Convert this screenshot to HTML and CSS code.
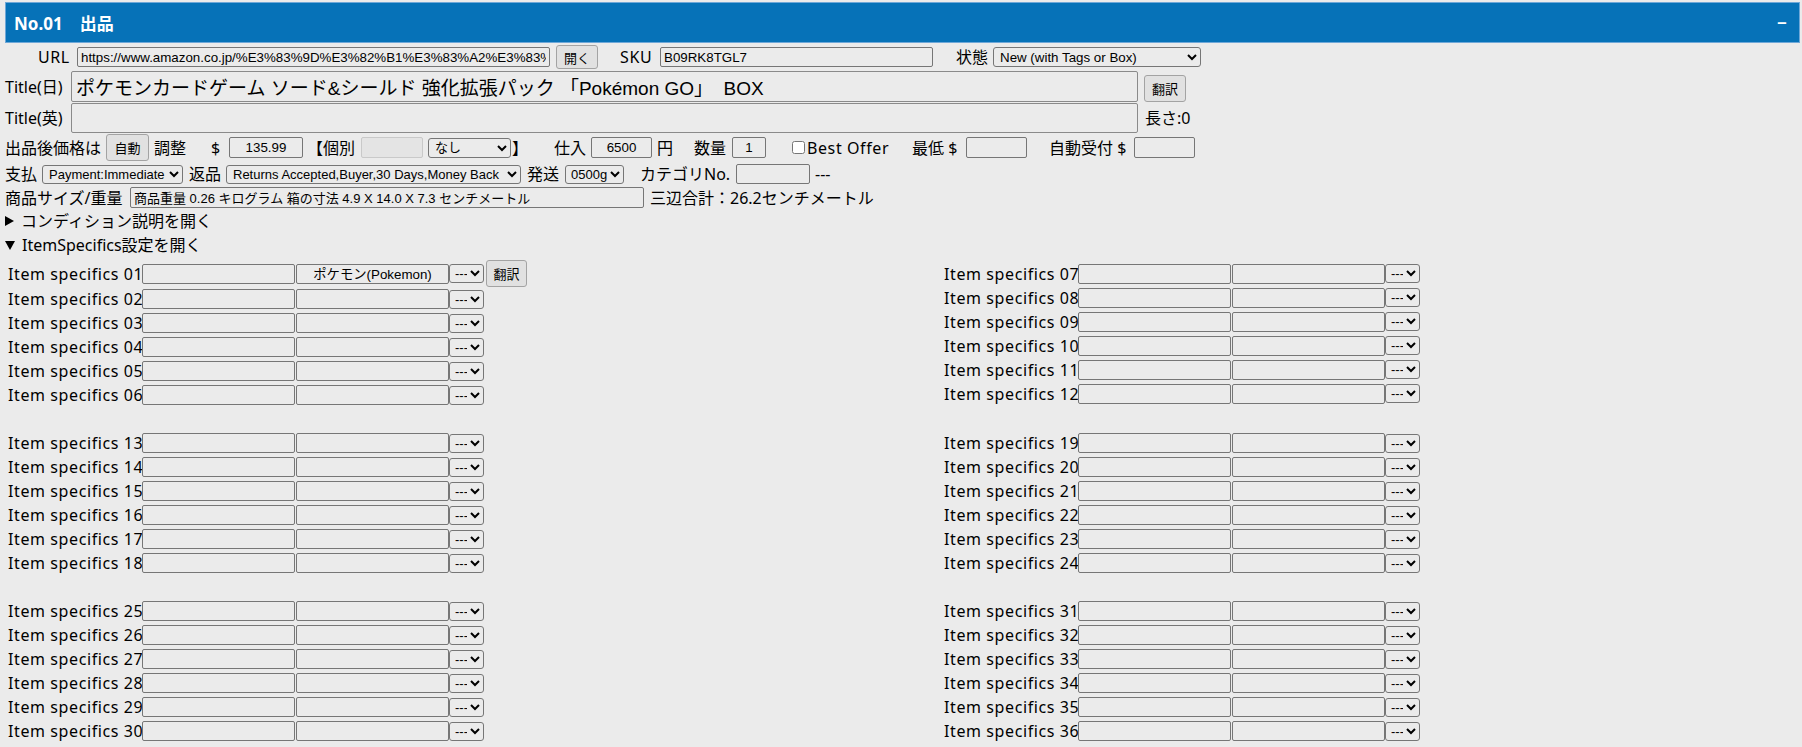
FILE: index.html
```html
<!DOCTYPE html>
<html lang="ja">
<head>
<meta charset="utf-8">
<title>No.01 出品</title>
<link rel="stylesheet" href="styles.css">
</head>
<body>
<div class="panel">
  <div class="panel-head"><span class="panel-title">No.01　出品</span><span class="panel-toggle">−</span></div>
  <div class="panel-body">
    <div class="row row-url">
      <span class="lbl lat w-url">URL</span>
      <input class="in in-url" value="https://www.amazon.co.jp/%E3%83%9D%E3%82%B1%E3%83%A2%E3%83%B3%E3%82%AB%E3%83%BC%E3%83%89">
      <button class="btn btn-open">開く</button>
      <span class="lbl lat w-sku">SKU</span>
      <input class="in in-sku" value="B09RK8TGL7">
      <span class="lbl w-state">状態</span>
      <select class="sel sel-cond"><option>New (with Tags or Box)</option></select>
    </div>
    <div class="row row-t1">
      <span class="lbl w-title">Title(日)</span>
      <input class="in in-title" value="ポケモンカードゲーム ソード&amp;シールド 強化拡張パック 「Pokémon GO」  BOX">
      <button class="btn btn-tr">翻訳</button>
    </div>
    <div class="row row-t2">
      <span class="lbl w-title">Title(英)</span>
      <input class="in in-title" value="">
      <span class="lbl len">長さ:0</span>
    </div>
    <div class="row row-price">
      <span class="lbl w-after">出品後価格は</span>
      <button class="btn btn-auto">自動</button>
      <span class="lbl w-adj">調整</span>
      <span class="lbl w-dol">$</span>
      <input class="in in-c in-price" value="135.99">
      <span class="lbl w-kobetsu">【個別</span>
      <input class="in in-dis" disabled>
      <select class="sel sel-nashi"><option>なし</option></select>
      <span class="lbl w-br">】</span>
      <span class="lbl w-shiire">仕入</span>
      <input class="in in-c in-cost" value="6500">
      <span class="lbl w-yen">円</span>
      <span class="lbl w-qty">数量</span>
      <input class="in in-c in-qty" value="1">
      <input type="checkbox" class="chk">
      <span class="lbl lat w-best">Best Offer</span>
      <span class="lbl w-min">最低 $</span>
      <input class="in in-min">
      <span class="lbl w-autoacc">自動受付 $</span>
      <input class="in in-min">
    </div>
    <div class="row row-pay">
      <span class="lbl w-pay">支払</span>
      <select class="sel sel-pay"><option>Payment:Immediate</option></select>
      <span class="lbl w-ret">返品</span>
      <select class="sel sel-ret"><option>Returns Accepted,Buyer,30 Days,Money Back</option></select>
      <span class="lbl w-ship">発送</span>
      <select class="sel sel-ship"><option>0500g</option></select>
      <span class="lbl w-cat">カテゴリNo.</span>
      <input class="in in-cat">
      <span class="lbl w-dash">---</span>
    </div>
    <div class="row row-size">
      <span class="lbl w-size">商品サイズ/重量</span>
      <input class="in in-size" value="商品重量 0.26 キログラム 箱の寸法 4.9 X 14.0 X 7.3 センチメートル">
      <span class="lbl w-sum">三辺合計：26.2センチメートル</span>
    </div>
    <details class="dt">
      <summary class="sum"><svg class="tri" width="9" height="10" viewBox="0 0 9 10"><polygon points="0,0 9,5 0,10"/></svg><span class="sum-text">コンディション説明を開く</span></summary>
      <textarea class="cond-text"></textarea>
    </details>
    <details class="dt" open>
      <summary class="sum"><svg class="tri" width="10" height="9" viewBox="0 0 10 9"><polygon points="0,0 10,0 5,9"/></svg><span class="sum-text">ItemSpecifics設定を開く</span></summary>
      <div class="specs">
        <div class="band">
          <div class="col col-l">
            <div class="is-row is-row-first"><span class="is-label">Item specifics 01</span><input class="in is-in"><input class="in is-in in-c" value="ポケモン(Pokemon)"><select class="sel is-sel"><option>---</option></select><button class="btn btn-is">翻訳</button></div>
            <div class="is-row"><span class="is-label">Item specifics 02</span><input class="in is-in"><input class="in is-in in-c"><select class="sel is-sel"><option>---</option></select></div>
            <div class="is-row"><span class="is-label">Item specifics 03</span><input class="in is-in"><input class="in is-in in-c"><select class="sel is-sel"><option>---</option></select></div>
            <div class="is-row"><span class="is-label">Item specifics 04</span><input class="in is-in"><input class="in is-in in-c"><select class="sel is-sel"><option>---</option></select></div>
            <div class="is-row"><span class="is-label">Item specifics 05</span><input class="in is-in"><input class="in is-in in-c"><select class="sel is-sel"><option>---</option></select></div>
            <div class="is-row"><span class="is-label">Item specifics 06</span><input class="in is-in"><input class="in is-in in-c"><select class="sel is-sel"><option>---</option></select></div>
          </div>
          <div class="col col-r">
            <div class="is-row"><span class="is-label">Item specifics 07</span><input class="in is-in"><input class="in is-in in-c"><select class="sel is-sel"><option>---</option></select></div>
            <div class="is-row"><span class="is-label">Item specifics 08</span><input class="in is-in"><input class="in is-in in-c"><select class="sel is-sel"><option>---</option></select></div>
            <div class="is-row"><span class="is-label">Item specifics 09</span><input class="in is-in"><input class="in is-in in-c"><select class="sel is-sel"><option>---</option></select></div>
            <div class="is-row"><span class="is-label">Item specifics 10</span><input class="in is-in"><input class="in is-in in-c"><select class="sel is-sel"><option>---</option></select></div>
            <div class="is-row"><span class="is-label">Item specifics 11</span><input class="in is-in"><input class="in is-in in-c"><select class="sel is-sel"><option>---</option></select></div>
            <div class="is-row"><span class="is-label">Item specifics 12</span><input class="in is-in"><input class="in is-in in-c"><select class="sel is-sel"><option>---</option></select></div>
          </div>
        </div>
        <div class="band">
          <div class="col col-l">
            <div class="is-row"><span class="is-label">Item specifics 13</span><input class="in is-in"><input class="in is-in in-c"><select class="sel is-sel"><option>---</option></select></div>
            <div class="is-row"><span class="is-label">Item specifics 14</span><input class="in is-in"><input class="in is-in in-c"><select class="sel is-sel"><option>---</option></select></div>
            <div class="is-row"><span class="is-label">Item specifics 15</span><input class="in is-in"><input class="in is-in in-c"><select class="sel is-sel"><option>---</option></select></div>
            <div class="is-row"><span class="is-label">Item specifics 16</span><input class="in is-in"><input class="in is-in in-c"><select class="sel is-sel"><option>---</option></select></div>
            <div class="is-row"><span class="is-label">Item specifics 17</span><input class="in is-in"><input class="in is-in in-c"><select class="sel is-sel"><option>---</option></select></div>
            <div class="is-row"><span class="is-label">Item specifics 18</span><input class="in is-in"><input class="in is-in in-c"><select class="sel is-sel"><option>---</option></select></div>
          </div>
          <div class="col col-r">
            <div class="is-row"><span class="is-label">Item specifics 19</span><input class="in is-in"><input class="in is-in in-c"><select class="sel is-sel"><option>---</option></select></div>
            <div class="is-row"><span class="is-label">Item specifics 20</span><input class="in is-in"><input class="in is-in in-c"><select class="sel is-sel"><option>---</option></select></div>
            <div class="is-row"><span class="is-label">Item specifics 21</span><input class="in is-in"><input class="in is-in in-c"><select class="sel is-sel"><option>---</option></select></div>
            <div class="is-row"><span class="is-label">Item specifics 22</span><input class="in is-in"><input class="in is-in in-c"><select class="sel is-sel"><option>---</option></select></div>
            <div class="is-row"><span class="is-label">Item specifics 23</span><input class="in is-in"><input class="in is-in in-c"><select class="sel is-sel"><option>---</option></select></div>
            <div class="is-row"><span class="is-label">Item specifics 24</span><input class="in is-in"><input class="in is-in in-c"><select class="sel is-sel"><option>---</option></select></div>
          </div>
        </div>
        <div class="band">
          <div class="col col-l">
            <div class="is-row"><span class="is-label">Item specifics 25</span><input class="in is-in"><input class="in is-in in-c"><select class="sel is-sel"><option>---</option></select></div>
            <div class="is-row"><span class="is-label">Item specifics 26</span><input class="in is-in"><input class="in is-in in-c"><select class="sel is-sel"><option>---</option></select></div>
            <div class="is-row"><span class="is-label">Item specifics 27</span><input class="in is-in"><input class="in is-in in-c"><select class="sel is-sel"><option>---</option></select></div>
            <div class="is-row"><span class="is-label">Item specifics 28</span><input class="in is-in"><input class="in is-in in-c"><select class="sel is-sel"><option>---</option></select></div>
            <div class="is-row"><span class="is-label">Item specifics 29</span><input class="in is-in"><input class="in is-in in-c"><select class="sel is-sel"><option>---</option></select></div>
            <div class="is-row"><span class="is-label">Item specifics 30</span><input class="in is-in"><input class="in is-in in-c"><select class="sel is-sel"><option>---</option></select></div>
          </div>
          <div class="col col-r">
            <div class="is-row"><span class="is-label">Item specifics 31</span><input class="in is-in"><input class="in is-in in-c"><select class="sel is-sel"><option>---</option></select></div>
            <div class="is-row"><span class="is-label">Item specifics 32</span><input class="in is-in"><input class="in is-in in-c"><select class="sel is-sel"><option>---</option></select></div>
            <div class="is-row"><span class="is-label">Item specifics 33</span><input class="in is-in"><input class="in is-in in-c"><select class="sel is-sel"><option>---</option></select></div>
            <div class="is-row"><span class="is-label">Item specifics 34</span><input class="in is-in"><input class="in is-in in-c"><select class="sel is-sel"><option>---</option></select></div>
            <div class="is-row"><span class="is-label">Item specifics 35</span><input class="in is-in"><input class="in is-in in-c"><select class="sel is-sel"><option>---</option></select></div>
            <div class="is-row"><span class="is-label">Item specifics 36</span><input class="in is-in"><input class="in is-in in-c"><select class="sel is-sel"><option>---</option></select></div>
          </div>
        </div>
      </div>
    </details>
  </div>
</div>
</body>
</html>
```

FILE: styles.css
```css
* { box-sizing: border-box; }

html, body { height: 100%; }

body {
  margin: 0;
  background: #ebebeb;
  color: #000;
  font-family: "Noto Sans", "Noto Sans CJK JP", sans-serif;
  font-size: 16px;
  overflow: hidden;
}

.panel { margin: 2px 2px 0 5px; }

.panel-head {
  height: 41px;
  background: #0672b8;
  border: 1px solid #6fa8d8;
  display: flex;
  align-items: center;
  justify-content: space-between;
  padding: 0 12px 0 8px;
  color: #fff;
  font-weight: bold;
  font-size: 17px;
}

.panel-toggle { font-size: 17px; font-weight: bold; }

.row {
  display: flex;
  align-items: center;
  white-space: nowrap;
  margin-top: 1px;
}

.lbl { display: block; flex: none; line-height: 20px; }
.lat { letter-spacing: 0.6px; }

/* form controls */
.in {
  flex: none;
  height: 20px;
  border: 1px solid #767676;
  border-radius: 2px;
  background: transparent;
  color: #000;
  font: 13.33px "Liberation Sans", "Noto Sans CJK JP", sans-serif;
  padding: 0 3px;
  margin: 0;
}
.in-c { text-align: center; }

.btn {
  flex: none;
  font: 13px "Noto Sans CJK JP", sans-serif;
  color: #000;
  background: #e1e1e1;
  border: 1px solid #a3a3a3;
  border-radius: 3px;
  padding: 0;
  margin: 0;
}

.sel {
  flex: none;
  height: 20px;
  font: 13px "Liberation Sans", "Noto Sans CJK JP", sans-serif;
  color: #000;
  background-color: transparent;
  border: 1px solid #767676;
  border-radius: 3px;
  padding: 0 0 0 2px;
  margin: 0;
}

/* URL row */
.row-url { height: 26px; }
.w-url { margin-left: 33px; width: 32px; }
.in-url { margin-left: 7px; width: 473px; }
.btn-open { margin-left: 6px; width: 42px; height: 24px; }
.w-sku { margin-left: 22px; width: 34px; }
.in-sku { margin-left: 6px; width: 273px; }
.w-state { margin-left: 23px; width: 32px; }
.sel-cond { margin-left: 5px; width: 208px; font-size: 13.33px; }

/* Title rows */
.row-t1 { height: 31px; }
.row-t2 { height: 30px; }
.w-title { width: 60px; }
.in-title {
  margin-left: 6px;
  width: 1067px;
  height: 100%;
  font-size: 19px;
  padding: 0 4px;
  border-color: #8a8a8a;
}
.btn-tr { margin-left: 6px; width: 42px; height: 27px; align-self: flex-end; }
.len { margin-left: 7px; }

/* price row */
.row-price { height: 27px; }
.w-after { width: 96px; }
.btn-auto { margin-left: 5px; width: 43px; height: 27px; }
.w-adj { margin-left: 5px; width: 32px; }
.w-dol { margin-left: 25px; width: 9px; }
.in-price { margin-left: 9px; width: 74px; height: 21px; }
.w-kobetsu { margin-left: 4px; width: 48px; }
.in-dis { margin-left: 6px; width: 62px; height: 21px; border-color: #c9c9c9; background: #e4e4e4; }
.sel-nashi { margin-left: 5px; width: 83px; }
.w-br { margin-left: 1px; width: 16px; }
.w-shiire { margin-left: 26px; width: 32px; }
.in-cost { margin-left: 5px; width: 61px; height: 21px; }
.w-yen { margin-left: 5px; width: 16px; }
.w-qty { margin-left: 21px; width: 32px; }
.in-qty { margin-left: 6px; width: 34px; height: 21px; }
.chk { flex: none; margin: 0 0 0 26px; width: 13px; height: 13px; }
.w-best { margin-left: 2px; width: 84px; }
.w-min { margin-left: 21px; width: 48px; }
.in-min { margin-left: 6px; width: 61px; height: 21px; }
.w-autoacc { margin-left: 22px; width: 79px; }

/* payment row */
.row-pay { height: 24px; }
.w-pay { width: 32px; }
.sel-pay { margin-left: 5px; width: 141px; height: 19px; }
.w-ret { margin-left: 6px; width: 32px; }
.sel-ret { margin-left: 5px; width: 295px; height: 19px; }
.w-ship { margin-left: 6px; width: 32px; }
.sel-ship { margin-left: 6px; width: 59px; height: 19px; padding-left: 1px; }
.w-cat { margin-left: 16px; width: 91px; }
.in-cat { margin-left: 5px; width: 74px; }
.w-dash { margin-left: 5px; }

/* size row */
.row-size { height: 23px; margin-top: 0; }
.w-size { width: 119px; }
.in-size { margin-left: 6px; width: 514px; height: 21px; font-size: 13px; }
.w-sum { margin-left: 6px; }

/* details */
.dt { margin: 0; }
.sum {
  list-style: none;
  display: flex;
  align-items: center;
  height: 24px;
  cursor: default;
}
.sum::-webkit-details-marker { display: none; }
.tri { flex: none; fill: #000; }
.sum-text { margin-left: 7px; line-height: 20px; }
.cond-text { width: 600px; height: 80px; }

/* item specifics */
.specs { padding-top: 3px; }
.band {
  display: flex;
  align-items: center;
  margin-bottom: 24px;
}
.col { display: flex; flex-direction: column; }
.col-l { width: 937px; padding-left: 3px; }
.col-r { padding-left: 2px; }

.is-row {
  display: flex;
  align-items: center;
  height: 24px;
  white-space: nowrap;
}
.is-row-first { height: 27px; }
.is-label { width: 134px; flex: none; letter-spacing: 0.6px; line-height: 20px; }
.is-in { width: 153px; }
.is-in + .is-in { margin-left: 1px; }
.is-sel { width: 35px; height: 19px; padding-left: 1px; }
.btn-is { margin-left: 2px; width: 41px; height: 27px; }
```
